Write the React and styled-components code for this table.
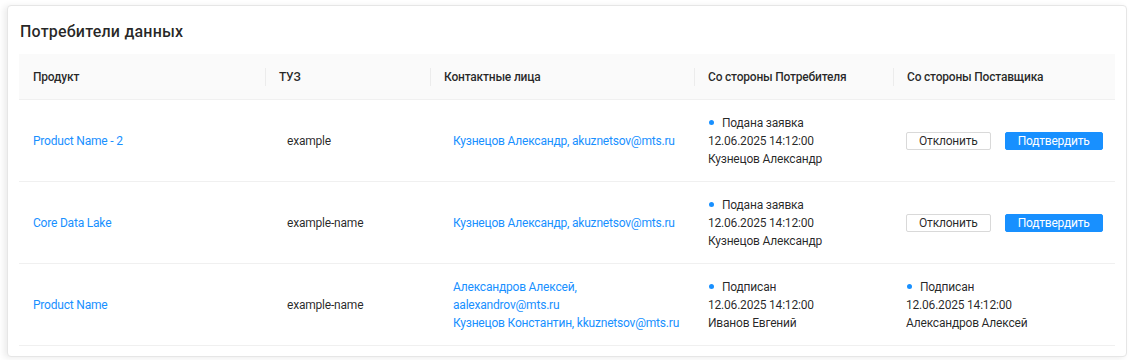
import React from "react";
import styled, { createGlobalStyle } from "styled-components";

const GlobalStyle = createGlobalStyle`
  body {
    margin: 0;
    background: #ffffff;
    font-family: Roboto, "Liberation Sans", sans-serif;
    color: rgba(0, 0, 0, 0.85);
  }
`;

const Page = styled.div`
  padding: 5px 6px 4px 7px;
`;

const Card = styled.section`
  border: 1px solid #e6e6e6;
  border-radius: 4px;
  box-shadow: -3px 1px 6px rgba(0, 0, 0, 0.08);
  padding: 14px 11px 10px 11px;
  background: #fff;
`;

const Title = styled.h2`
  margin: 0 0 10px 1px;
  font-size: 16px;
  line-height: 24px;
  font-weight: 500;
  letter-spacing: 0.2px;
  color: rgba(0, 0, 0, 0.85);
`;

const COLS = "246px 165px 264px 199px 222px";

const HeadRow = styled.div`
  display: grid;
  grid-template-columns: ${COLS};
  height: 46px;
  background: #fafafa;
  border-bottom: 1px solid #f0f0f0;
  box-sizing: border-box;
`;

const HeadCell = styled.div`
  position: relative;
  display: flex;
  align-items: center;
  padding-left: 14px;
  font-size: 12px;
  font-weight: 500;
  letter-spacing: -0.2px;
  color: rgba(0, 0, 0, 0.85);

  &:not(:first-child)::before {
    content: "";
    position: absolute;
    left: 0;
    top: 50%;
    transform: translateY(-50%);
    width: 1px;
    height: 18px;
    background: #ececec;
  }
`;

const Row = styled.div`
  display: grid;
  grid-template-columns: ${COLS};
  height: 82px;
  border-bottom: 1px solid #f0f0f0;
  box-sizing: border-box;
`;

const Cell = styled.div`
  display: flex;
  flex-direction: column;
  justify-content: center;
  padding-left: ${(p) => p.$indent || 14}px;
  padding-right: ${(p) => p.$right || 8}px;
  font-size: 12px;
  line-height: 18px;
  letter-spacing: -0.2px;
  color: rgba(0, 0, 0, 0.85);
`;

const Link = styled.a`
  color: #1890ff;
  text-decoration: none;
  cursor: pointer;
`;

const Status = styled.div`
  display: flex;
  align-items: center;

  &::before {
    content: "";
    width: 5px;
    height: 5px;
    border-radius: 50%;
    background: #1890ff;
    margin-right: 8px;
    margin-left: 1px;
  }
`;

const Actions = styled.div`
  display: flex;
  gap: 14px;
`;

const Button = styled.button`
  height: 18px;
  padding: 0 12px;
  border-radius: 2px;
  font-family: inherit;
  font-size: 12px;
  line-height: 16px;
  letter-spacing: -0.2px;
  cursor: pointer;
  border: 1px solid ${(p) => (p.$primary ? "#1890ff" : "#d9d9d9")};
  background: ${(p) => (p.$primary ? "#1890ff" : "#fff")};
  color: ${(p) => (p.$primary ? "#fff" : "rgba(0, 0, 0, 0.85)")};
`;

const rows = [
  {
    product: "Product Name - 2",
    tuz: "example",
    contacts: ["Кузнецов Александр, akuznetsov@mts.ru"],
    consumer: { status: "Подана заявка", date: "12.06.2025 14:12:00", who: "Кузнецов Александр" },
    supplier: null,
  },
  {
    product: "Core Data Lake",
    tuz: "example-name",
    contacts: ["Кузнецов Александр, akuznetsov@mts.ru"],
    consumer: { status: "Подана заявка", date: "12.06.2025 14:12:00", who: "Кузнецов Александр" },
    supplier: null,
  },
  {
    product: "Product Name",
    tuz: "example-name",
    contacts: [
      "Александров Алексей, aalexandrov@mts.ru",
      "Кузнецов Константин, kkuznetsov@mts.ru",
    ],
    consumer: { status: "Подписан", date: "12.06.2025 14:12:00", who: "Иванов Евгений" },
    supplier: { status: "Подписан", date: "12.06.2025 14:12:00", who: "Александров Алексей" },
  },
];

const StatusBlock = ({ data }) => (
  <>
    <Status>{data.status}</Status>
    <div>{data.date}</div>
    <div>{data.who}</div>
  </>
);

export default function App() {
  return (
    <Page>
      <GlobalStyle />
      <Card>
        <Title>Потребители данных</Title>
        <HeadRow>
          <HeadCell>Продукт</HeadCell>
          <HeadCell>ТУЗ</HeadCell>
          <HeadCell>Контактные лица</HeadCell>
          <HeadCell>Со стороны Потребителя</HeadCell>
          <HeadCell>Со стороны Поставщика</HeadCell>
        </HeadRow>
        {rows.map((r) => (
          <Row key={r.product}>
            <Cell>
              <Link>{r.product}</Link>
            </Cell>
            <Cell $indent={22}>{r.tuz}</Cell>
            <Cell $indent={23} $right={12}>
              {r.contacts.map((c) => (
                <Link key={c}>{c}</Link>
              ))}
            </Cell>
            <Cell>
              <StatusBlock data={r.consumer} />
            </Cell>
            <Cell $indent={13}>
              {r.supplier ? (
                <StatusBlock data={r.supplier} />
              ) : (
                <Actions>
                  <Button>Отклонить</Button>
                  <Button $primary>Подтвердить</Button>
                </Actions>
              )}
            </Cell>
          </Row>
        ))}
      </Card>
    </Page>
  );
}
